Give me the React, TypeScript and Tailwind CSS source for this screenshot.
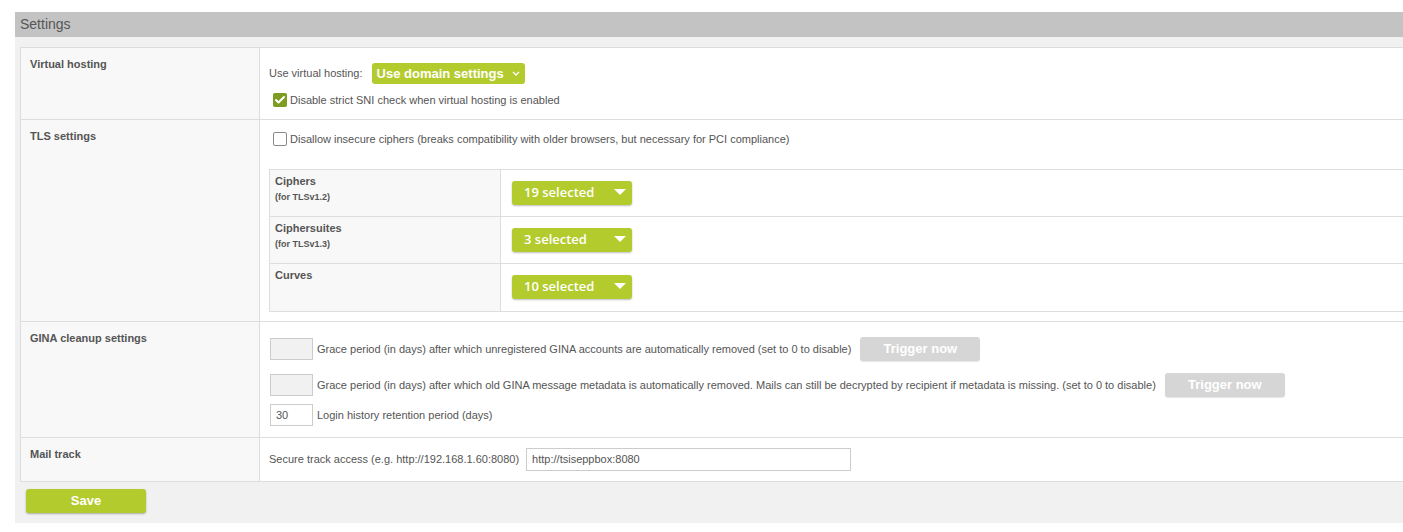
import { Check } from "lucide-react";

const font = { fontFamily: '"Liberation Sans", Arial, sans-serif' };

function MultiSelect({ label }: { label: string }) {
  return (
    <div
      className="flex h-[24px] w-[120px] items-center justify-between rounded-[3px] bg-[#b3cb2d] pl-[12px] pr-[5px] text-[13px] font-semibold text-white shadow-[0_1px_2px_rgba(0,0,0,0.25)]"
      style={{ fontFamily: '"Open Sans", sans-serif' }}
    >
      <span>{label}</span>
      <svg width="12" height="7" viewBox="0 0 12 7" className="mr-[1px]">
        <path d="M0 0 L12 0 L6 6 Z" fill="white" />
      </svg>
    </div>
  );
}

function TriggerButton() {
  return (
    <div className="flex h-[24px] w-[120px] items-center justify-center rounded-[3px] bg-[#d6d6d6] text-[13px] font-bold text-white shadow-[0_1px_1px_rgba(0,0,0,0.1)]">
      Trigger now
    </div>
  );
}

function Row({
  label,
  children,
  className = "",
}: {
  label: string;
  children: React.ReactNode;
  className?: string;
}) {
  return (
    <div className={`flex border-b border-[#dddddd] ${className}`}>
      <div className="w-[239px] shrink-0 border-r border-[#dddddd] bg-[#f8f8f8] px-[9px] pt-[8px] text-[11px] font-bold text-[#555]">
        {label}
      </div>
      <div className="flex-1 bg-white">{children}</div>
    </div>
  );
}

function CipherRow({
  label,
  sub,
  value,
  last,
}: {
  label: string;
  sub?: string;
  value: string;
  last?: boolean;
}) {
  return (
    <div className={`flex h-[47px] ${last ? "" : "border-b border-[#dddddd]"}`}>
      <div className="w-[231px] shrink-0 border-r border-[#dddddd] bg-[#f8f8f8] px-[5px] pt-[4px] font-bold text-[#555]">
        <div className="text-[11px] leading-[14px]">{label}</div>
        {sub && <div className="mt-[3px] text-[9px] leading-[12px]">{sub}</div>}
      </div>
      <div className="flex-1 bg-white pl-[11px] pt-[11px]">
        <MultiSelect label={value} />
      </div>
    </div>
  );
}

export default function App() {
  return (
    <div className="h-[532px] w-[1403px] overflow-hidden bg-white text-[#555]" style={font}>
      <div className="ml-[15px] mt-[12px] w-[1420px] bg-[#f1f1f1] pb-[10px]">
        <div className="flex h-[25px] items-center bg-[#c3c3c3] px-[5px] text-[14px] text-[#555]">
          Settings
        </div>

        <div className="ml-[5px] mt-[10px] border-l border-t border-[#dddddd]">
          {/* Virtual hosting */}
          <Row label="Virtual hosting" className="h-[72px]">
            <div className="pl-[9px] pt-[15px]">
              <div className="flex items-center text-[11px]">
                <span>Use virtual hosting:</span>
                <div className="ml-[9px] flex h-[21px] items-center rounded-[3px] bg-[#b3cb2d] pl-[5px] pr-[5px] text-[13px] font-bold text-white">
                  Use domain settings
                  <svg width="8" height="5" viewBox="0 0 8 5" className="ml-[8px]">
                    <path d="M1 1 L4 4 L7 1" stroke="white" strokeWidth="1.3" fill="none" />
                  </svg>
                </div>
              </div>
              <div className="mt-[8px] flex items-center pl-[4px] text-[11px]">
                <span className="flex h-[14px] w-[14px] items-center justify-center rounded-[2px] bg-[#7e9c21]">
                  <Check className="h-[12px] w-[12px] text-white" strokeWidth={4} />
                </span>
                <span className="ml-[3px]">Disable strict SNI check when virtual hosting is enabled</span>
              </div>
            </div>
          </Row>

          {/* TLS settings */}
          <Row label="TLS settings" className="h-[202px]">
            <div className="pl-[9px] pt-[11px]">
              <div className="flex items-center pl-[4px] text-[11px]">
                <span className="h-[14px] w-[14px] rounded-[2px] border border-[#8a8a8a] bg-white" />
                <span className="ml-[3px]">
                  Disallow insecure ciphers (breaks compatibility with older browsers, but necessary for PCI compliance)
                </span>
              </div>
              <div className="mt-[21px] border-l border-t border-b border-[#dddddd]">
                <CipherRow label="Ciphers" sub="(for TLSv1.2)" value="19 selected" />
                <CipherRow label="Ciphersuites" sub="(for TLSv1.3)" value="3 selected" />
                <CipherRow label="Curves" value="10 selected" last />
              </div>
            </div>
          </Row>

          {/* GINA cleanup */}
          <Row label="GINA cleanup settings" className="h-[116px]">
            <div className="pl-[10px] pt-[15px] text-[11px]">
              <div className="flex items-center">
                <div className="h-[22px] w-[43px] border border-[#cccccc] bg-[#f1f1f1]" />
                <span className="ml-[4px]">
                  Grace period (in days) after which unregistered GINA accounts are automatically removed (set to 0 to disable)
                </span>
                <div className="ml-[9px]">
                  <TriggerButton />
                </div>
              </div>
              <div className="mt-[12px] flex items-center">
                <div className="h-[22px] w-[43px] border border-[#cccccc] bg-[#f1f1f1]" />
                <span className="ml-[4px]">
                  Grace period (in days) after which old GINA message metadata is automatically removed. Mails can still be decrypted by recipient if metadata is missing. (set to 0 to disable)
                </span>
                <div className="ml-[9px]">
                  <TriggerButton />
                </div>
              </div>
              <div className="mt-[7px] flex items-center">
                <div className="flex h-[22px] w-[43px] items-center border border-[#cccccc] bg-white pl-[5px]">
                  30
                </div>
                <span className="ml-[4px]">Login history retention period (days)</span>
              </div>
            </div>
          </Row>

          {/* Mail track */}
          <Row label="Mail track" className="h-[44px]">
            <div className="flex items-center pl-[9px] pt-[10px] text-[11px]">
              <span>Secure track access (e.g. http://192.168.1.60:8080)</span>
              <div className="ml-[7px] flex h-[23px] w-[325px] items-center border border-[#cccccc] bg-white pl-[5px]">
                http://tsiseppbox:8080
              </div>
            </div>
          </Row>
        </div>

        <div className="ml-[11px] mt-[7px] flex h-[24px] w-[120px] items-center justify-center rounded-[3px] bg-[#b3cb2d] text-[13px] font-bold text-white shadow-[0_1px_2px_rgba(0,0,0,0.3)]">
          Save
        </div>
      </div>
    </div>
  );
}
